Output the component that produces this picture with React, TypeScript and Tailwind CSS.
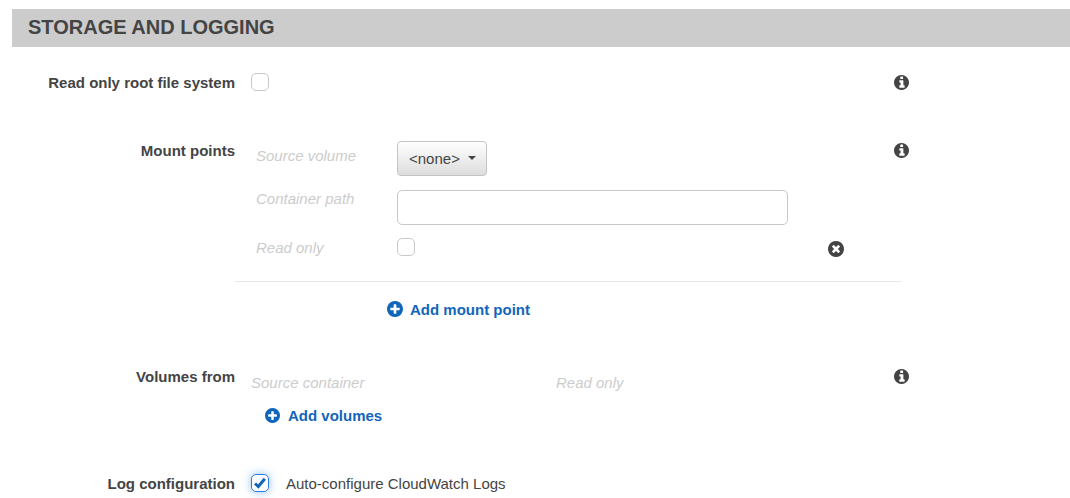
import { useState } from "react";
import type { ReactNode } from "react";

const CIRCLE =
  "M1664 896q0 209-103 385.500t-279.500 279.500-385.500 103-385.500-103-279.500-279.500-103-385.500 103-385.500 279.500-279.500 385.500-103 385.500 103 279.500 279.500 103 385.500z";

const GLYPHS = {
  info: "M1216 1408v-192q0-14-9-23t-23-9h-96v-480q0-14-9-23t-23-9h-352q-14 0-23 9t-9 23v160q0 14 9 23t23 9h96v288h-96q-14 0-23 9t-9 23v192q0 14 9 23t23 9h480q14 0 23-9t9-23zM1056 512v-192q0-14-9-23t-23-9h-224q-14 0-23 9t-9 23v192q0 14 9 23t23 9h224q14 0 23-9t9-23z",
  plus: "M1344 960v-128q0-26-19-45t-45-19h-256v-256q0-26-19-45t-45-19h-128q-26 0-45 19t-19 45v256h-256q-26 0-45 19t-19 45v128q0 26 19 45t45 19h256v256q0 26 19 45t45 19h128q26 0 45-19t19-45v-256h256q26 0 45-19t19-45z",
  times: "M1277 1122q0-26-19-45l-181-181 181-181q19-19 19-45 0-27-19-46l-90-90q-19-19-46-19-26 0-45 19l-181 181-181-181q-19-19-45-19-27 0-46 19l-90 90q-19 19-19 46 0 26 19 45l181 181-181 181q-19 19-19 45 0 27 19 46l90 90q19 19 46 19 26 0 45-19l181-181 181 181q19 19 45 19 27 0 46-19l90-90q19-19 19-46z",
};

const CircleIcon = ({ glyph, className }: { glyph: keyof typeof GLYPHS; className: string }) => (
  <svg viewBox="128 128 1536 1536" fill="currentColor" fillRule="evenodd" aria-hidden="true" className={className}>
    <path d={`${CIRCLE}${GLYPHS[glyph]}`} />
  </svg>
);

type CheckboxProps = {
  id: string;
  checked: boolean;
  onChange: (checked: boolean) => void;
};

const Checkbox = ({ id, checked, onChange }: CheckboxProps) => (
  <span className="relative block size-[18px] shrink-0">
    <input
      id={id}
      type="checkbox"
      checked={checked}
      onChange={(e) => onChange(e.target.checked)}
      className="block size-[18px] appearance-none rounded-[5px] border border-[#c8c8c8] bg-white checked:border-[#2a7de1] checked:shadow-[0_0_8px_rgba(42,125,225,0.5)]"
    />
    {checked && (
      <svg
        viewBox="0 0 12 12"
        fill="none"
        stroke="#1166bb"
        strokeWidth="3"
        aria-hidden="true"
        className="pointer-events-none absolute top-[3px] left-[3px] size-3"
      >
        <path d="M1 6.500L4.300 9.500L10.800 1.800" />
      </svg>
    )}
  </span>
);

type RowProps = {
  label: string;
  htmlFor?: string;
  info?: boolean;
  children: ReactNode;
};

const Row = ({ label, htmlFor, info, children }: RowProps) => (
  <div className="grid grid-cols-[223px_minmax(0,1fr)_15px] items-start">
    {htmlFor ? (
      <label htmlFor={htmlFor} className="text-right font-bold">
        {label}
      </label>
    ) : (
      <span className="text-right font-bold">{label}</span>
    )}
    <div>{children}</div>
    {info && (
      <button type="button" aria-label={`About ${label}`} className="pt-0.5">
        <CircleIcon glyph="info" className="size-[15px]" />
      </button>
    )}
  </div>
);

export default function App() {
  const [rootReadOnly, setRootReadOnly] = useState(false);
  const [mountReadOnly, setMountReadOnly] = useState(false);
  const [autoLogs, setAutoLogs] = useState(true);
  const [path, setPath] = useState("");

  return (
    <main className="bg-white pt-[9px] pl-3 font-['Liberation_Sans',Arial,sans-serif] text-[15px] leading-5 text-[#444]">
      <h2 className="bg-[#ccc] px-4 pt-1 pb-1.5 text-[20px] leading-7 font-bold">STORAGE AND LOGGING</h2>

      <form className="flex flex-col pt-[26px] pr-[161px] pb-4">
        <Row label="Read only root file system" htmlFor="root-read-only" info>
          <div className="pl-4">
            <Checkbox id="root-read-only" checked={rootReadOnly} onChange={setRootReadOnly} />
          </div>
        </Row>

        <div className="pt-12">
          <Row label="Mount points" info>
            <div className="grid grid-cols-[141px_minmax(0,391px)_16px] items-start gap-y-3.5 pl-[21px]">
              <label htmlFor="source-volume" className="pt-[5px] text-[#ccc] italic">
                Source volume
              </label>
              <div className="relative col-span-2 w-[90px]">
                <select
                  id="source-volume"
                  className="block h-[35px] w-full appearance-none rounded-[4px] border border-[#c4c4c4] bg-linear-to-b from-white to-[#ddd] pl-[11px]"
                >
                  <option>&lt;none&gt;</option>
                </select>
                <svg
                  viewBox="0 0 8 4"
                  fill="currentColor"
                  aria-hidden="true"
                  className="pointer-events-none absolute top-[15px] right-[11px] h-1 w-2"
                >
                  <path d="M0 0h8L4 4z" />
                </svg>
              </div>

              <label htmlFor="container-path" className="leading-[18px] text-[#ccc] italic">
                Container path
              </label>
              <input
                id="container-path"
                type="text"
                value={path}
                onChange={(e) => setPath(e.target.value)}
                className="col-span-2 h-[35px] w-full max-w-[391px] rounded-[5px] border border-[#c8c8c8] px-2.5"
              />
            </div>
            <div className="grid grid-cols-[141px_minmax(0,1fr)_16px] items-start pt-[13px] pr-[50px] pl-[21px]">
              <label htmlFor="mount-read-only" className="text-[#ccc] italic">
                Read only
              </label>
              <Checkbox id="mount-read-only" checked={mountReadOnly} onChange={setMountReadOnly} />
              <button type="button" aria-label="Remove mount point" className="pt-[3px]">
                <CircleIcon glyph="times" className="size-4" />
              </button>
            </div>
            <hr className="mt-[23px] -mr-2 border-[#e8e8e8]" />
            <button
              type="button"
              className="mt-[18px] ml-[152px] flex items-start gap-[7px] font-bold text-[#1166bb]"
            >
              <CircleIcon glyph="plus" className="mt-px size-4" />
              Add mount point
            </button>
          </Row>
        </div>

        <div className="pt-[47px]">
          <Row label="Volumes from" info>
            <div className="grid grid-cols-[305px_minmax(0,1fr)] pt-1.5 pl-4 text-[#ccc] italic">
              <span>Source container</span>
              <span>Read only</span>
            </div>
            <button
              type="button"
              className="mt-[13px] ml-[30px] flex items-start gap-2 font-bold text-[#1166bb]"
            >
              <CircleIcon glyph="plus" className="mt-0.5 size-[15px]" />
              Add volumes
            </button>
          </Row>
        </div>

        <div className="pt-12">
          <Row label="Log configuration" htmlFor="auto-logs">
            <div className="flex gap-[17px] pl-4">
              <Checkbox id="auto-logs" checked={autoLogs} onChange={setAutoLogs} />
              <label htmlFor="auto-logs">Auto-configure CloudWatch Logs</label>
            </div>
          </Row>
        </div>
      </form>
    </main>
  );
}
